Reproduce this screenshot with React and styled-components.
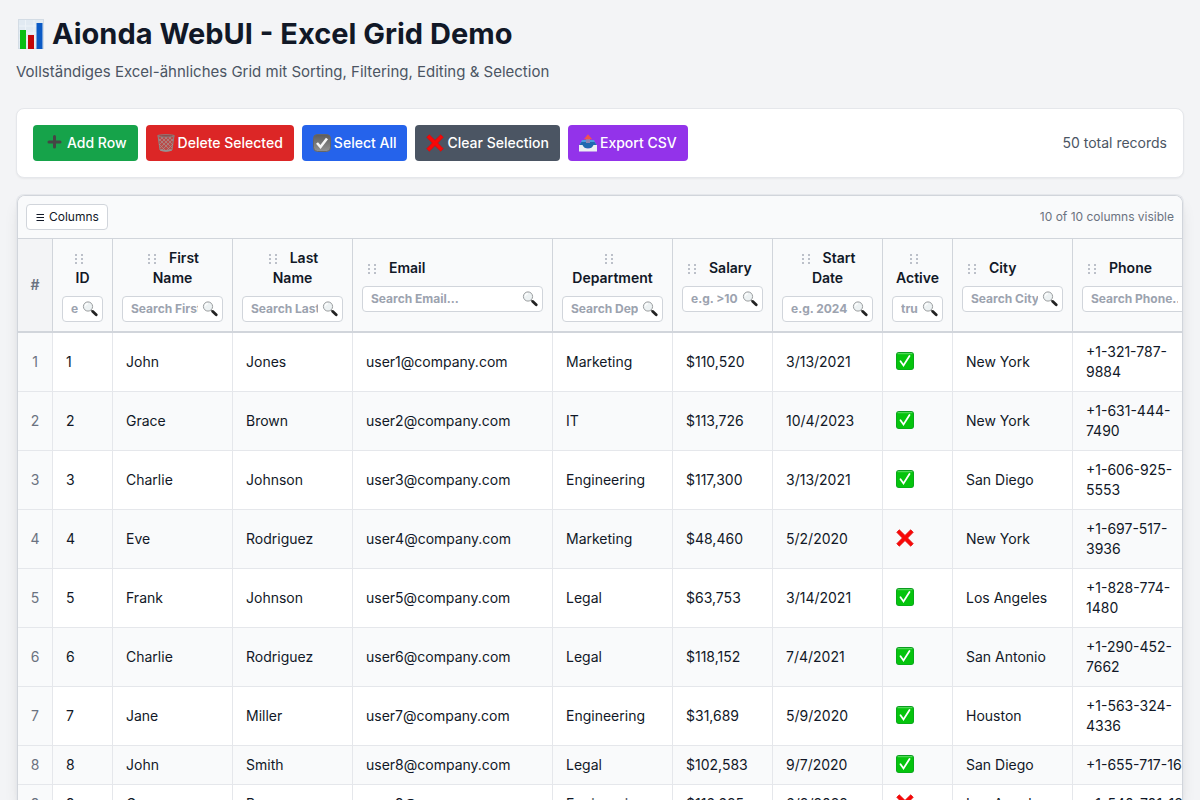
import React from "react";
import styled, { createGlobalStyle } from "styled-components";

const Global = createGlobalStyle`
  *, *::before, *::after { box-sizing: border-box; }
  html, body, #root { height: 100%; }
  body {
    margin: 0;
    background: #f3f4f6;
    color: #111827;
    font-family: Inter, "Liberation Sans", sans-serif;
    font-size: 14px;
    line-height: 20px;
    overflow: hidden;
  }
`;

const Page = styled.div`
  height: 100vh;
  display: flex;
  flex-direction: column;
  padding: 16px 16px 0;
`;

const Header = styled.header`
  margin-bottom: 24px;
`;

const Title = styled.h1`
  display: flex;
  align-items: center;
  gap: 6px;
  margin: 0 0 8px;
  font-size: 29px;
  line-height: 36px;
  font-weight: 700;
`;

const Subtitle = styled.p`
  margin: 0;
  font-size: 15px;
  line-height: 24px;
  color: #4b5563;
`;

const Toolbar = styled.section`
  display: flex;
  align-items: center;
  justify-content: space-between;
  flex: none;
  margin-bottom: 16px;
  padding: 16px;
  background: #fff;
  border: 1px solid #e5e7eb;
  border-radius: 8px;
  box-shadow: 0 1px 2px rgba(0, 0, 0, 0.05);
`;

const Actions = styled.div`
  display: flex;
  gap: 8px;
`;

const ActionButton = styled.button`
  display: flex;
  align-items: center;
  gap: 3px;
  height: 36px;
  padding: 0 11px;
  border: 0;
  border-radius: 4px;
  background: ${(p) => p.$color};
  color: #fff;
  font: 500 14px/20px Inter, "Liberation Sans", sans-serif;
  white-space: nowrap;
`;

const Total = styled.span`
  color: #4b5563;
`;

const Frame = styled.section`
  flex: 1;
  min-height: 0;
  border: 1px solid #e5e7eb;
  border-bottom: 0;
  border-radius: 8px 8px 0 0;
  box-shadow: 0 10px 15px -3px rgba(0, 0, 0, 0.1), 0 4px 6px -4px rgba(0, 0, 0, 0.1);
`;

const Grid = styled.div`
  height: 100%;
  overflow: hidden;
  background: #fff;
  border: 1px solid #d1d5db;
  border-bottom: 0;
  border-radius: 8px 8px 0 0;
`;

const GridBar = styled.div`
  display: flex;
  align-items: center;
  justify-content: space-between;
  padding: 8px;
  background: #f9fafb;
  border-bottom: 1px solid #d1d5db;
  font-size: 12px;
  line-height: 16px;
  color: #6b7280;
`;

const ColumnsButton = styled.button`
  display: flex;
  align-items: center;
  gap: 4px;
  height: 26px;
  padding: 0 8px;
  border: 1px solid #d1d5db;
  border-radius: 4px;
  background: #fff;
  color: #111827;
  font: 400 12px/16px Inter, "Liberation Sans", sans-serif;
`;

const Table = styled.table`
  width: 1195px;
  table-layout: fixed;
  border-collapse: separate;
  border-spacing: 0;
`;

const Col = styled.col`
  width: ${(p) => p.$width}px;
`;

const HeadCell = styled.th`
  height: 94px;
  padding: 9px;
  vertical-align: ${(p) => (p.$index ? "middle" : "top")};
  background: ${(p) => (p.$index ? "#f3f4f6" : "#f9fafb")};
  color: ${(p) => (p.$index ? "#6b7280" : "#111827")};
  border-right: 1px solid #d1d5db;
  border-bottom: 2px solid #d1d5db;
  font-weight: 600;
`;

const HeadInner = styled.div`
  display: flex;
  flex-direction: column;
  justify-content: center;
  min-height: 74px;
`;

const HeadLabel = styled.div`
  padding: 0 4px;
  margin-bottom: 8px;
  text-align: ${(p) => (p.$left ? "left" : "center")};
`;

const Grip = styled.svg`
  width: 10px;
  height: 10px;
  margin-right: ${(p) => (p.$alone ? 8 : 12)}px;
  margin-left: ${(p) => (p.$alone ? 0 : 1)}px;
  vertical-align: -1px;
  fill: #a7adb8;
`;

const Filter = styled.label`
  display: flex;
  align-items: center;
  height: 26px;
  padding: 0 4px 0 8px;
  border: 1px solid #d1d5db;
  border-radius: 4px;
  background: #fff;
`;

const FilterInput = styled.input`
  flex: 1;
  width: 0;
  min-width: 0;
  margin-right: 4px;
  padding: 0;
  border: 0;
  outline: 0;
  background: transparent;
  color: #111827;
  font: 700 12px/16px Inter, "Liberation Sans", sans-serif;
  &::placeholder { color: #9ca3af; opacity: 1; }
`;

const Row = styled.tr`
  background: ${(p) => (p.$even ? "#f9fafb" : "#fff")};
`;

const Cell = styled.td`
  padding: 9px 13px;
  border-right: 1px solid #e5e7eb;
  border-bottom: 1px solid #e5e7eb;
  & > svg { display: block; margin-bottom: 2px; }
`;

const PhoneCell = styled(Cell)`
  padding-right: 24px;
  white-space: ${(p) => (p.$single ? "nowrap" : "normal")};
`;

const IndexCell = styled(Cell)`
  padding: 9px 0;
  background: #f9fafb;
  color: #6b7280;
  text-align: center;
`;

const ChartIcon = () => (
  <svg width="30" height="32" viewBox="0 0 30 32" aria-hidden="true">
    <rect x="2.500" y="1.500" width="25" height="29" fill="#e1eaf2" stroke="#d3dce5" />
    <path d="M3 8h24M3 15h24M3 22h24M9.500 2v28M18 2v28" stroke="#edf3f8" />
    <rect x="4" y="12" width="6" height="19" fill="#08bd12" />
    <rect x="12" y="17" width="6" height="14" fill="#c30709" />
    <rect x="20.500" y="5" width="6" height="26" fill="#0b5ac5" />
  </svg>
);

const PlusIcon = () => (
  <svg width="20" height="18" viewBox="0 0 20 18" aria-hidden="true">
    <path d="M10.500 2.500v10.500M5 8h11" stroke="#454545" strokeWidth="3" strokeLinecap="round" />
  </svg>
);

const TrashIcon = () => (
  <svg width="18" height="18" viewBox="0 0 18 18" aria-hidden="true">
    <path d="M1 1.500 3 16q6 2 12 0L17 1.500z" fill="#b94b49" stroke="#8c8585" />
    <path d="m2 5 11 11M4 3l11 11M8 3l8 8M12 3l4 4M2 10l6 6M16 5 5 16M14 3 3 14M10 3 2 11M6 3 2 7M16 10l-6 6" stroke="#a8918f" strokeWidth=".7" />
    <path d="M3.500 15.800q5.500 2 11 0" fill="none" stroke="#989393" strokeWidth="1.800" />
    <ellipse cx="9" cy="1.800" rx="8.300" ry="1.200" fill="#8e4a47" stroke="#8d8585" strokeWidth=".8" />
  </svg>
);

const BoxIcon = () => (
  <svg width="18" height="18" viewBox="0 0 18 18" aria-hidden="true">
    <defs>
      <linearGradient id="box-fill" x2="0" y2="1">
        <stop stopColor="#5b5b5b" />
        <stop offset="1" stopColor="#929292" />
      </linearGradient>
    </defs>
    <rect x=".5" y=".5" width="17" height="17" rx="4" fill="url(#box-fill)" stroke="#666" />
    <path d="m4 9 3.500 4L14 4.500" fill="none" stroke="#f5f5f5" strokeWidth="2.600" />
  </svg>
);

const CrossIcon = () => (
  <svg width="18" height="18" viewBox="0 0 18 18" aria-hidden="true">
    <path d="M3.300.8 9 6.400 14.700.8 17.200 3.300 11.600 9l5.600 5.700-2.500 2.500L9 11.600l-5.700 5.600L.8 14.700 6.400 9 .8 3.300z" fill="#f90707" stroke="#e00808" strokeWidth=".8" strokeLinejoin="round" />
  </svg>
);

const OutboxIcon = () => (
  <svg width="18" height="18" viewBox="0 0 18 18" aria-hidden="true">
    <path d="M3 6h12l2.500 5v3H.5v-3z" fill="#4c9be0" />
    <path d="M2.500 8h13l2 3-4 3.500h-9L.5 11z" fill="#2168b0" />
    <path d="M0 11h3.500q1.500 3.500 5.500 3.500t5.500-3.500H18v6.500H0z" fill="#eceff2" />
    <path d="M7 9V5h4v4z" fill="#8d83b5" />
    <path d="M4.800 5.200 9 .3l4.200 4.900z" fill="#f15350" />
  </svg>
);

const CheckIcon = () => (
  <svg width="18" height="18" viewBox="0 0 18 18" aria-hidden="true">
    <rect width="18" height="18" rx="3" fill="#0b9c20" />
    <rect x=".6" y="1" width="16.800" height="16.400" rx="2.800" fill="#05c40d" />
    <path d="M2 1.700h14" stroke="#62de68" strokeWidth="1" strokeLinecap="round" />
    <path d="m4.500 9.300 3 4.200L13.500 4" fill="none" stroke="#fff" strokeWidth="1.800" strokeLinecap="round" />
  </svg>
);

const SearchIcon = () => (
  <svg width="16" height="16" viewBox="0 0 16 16" aria-hidden="true">
    <path d="m9 9 2 2" stroke="#777" strokeWidth="1.500" />
    <path d="m10.800 10.500 3.400 3.300" stroke="#222" strokeWidth="2.800" strokeLinecap="round" />
    <circle cx="6" cy="5.500" r="4.600" fill="#edf2f3" stroke="#9a9d9f" />
    <path d="M3.300 5.200A2.800 2.800 0 0 1 6 2.700" fill="none" stroke="#fff" strokeWidth="1.200" />
  </svg>
);

const GripIcon = (props) => (
  <Grip viewBox="0 0 10 10" aria-hidden="true" {...props}>
    {[1, 7].map((x) => [0, 4, 8].map((y) => <rect key={`${x}-${y}`} x={x} y={y} width="2" height="2" rx="1" />))}
  </Grip>
);

const MenuIcon = () => (
  <svg width="10" height="10" viewBox="0 0 10 10" aria-hidden="true">
    <path d="M1.500 2.500h7.500M1.500 5.500h7.500M1.500 8.500h7.500" stroke="#111827" strokeWidth="1.200" />
  </svg>
);

const actions = [
  ["Add Row", "#16a34a", PlusIcon],
  ["Delete Selected", "#dc2626", TrashIcon],
  ["Select All", "#2563eb", BoxIcon],
  ["Clear Selection", "#4b5563", CrossIcon],
  ["Export CSV", "#9333ea", OutboxIcon],
];

const columns = [
  { lines: ["", "ID"], width: 60, hint: "e.g. >100" },
  { lines: ["First", "Name"], width: 120, hint: "Search First Name..." },
  { lines: ["Last", "Name"], width: 120, hint: "Search Last Name..." },
  { lines: ["Email"], width: 200, hint: "Search Email..." },
  { lines: ["", "Department"], width: 120, hint: "Search Department..." },
  { lines: ["Salary"], width: 100, hint: "e.g. >1000" },
  { lines: ["Start", "Date"], width: 110, hint: "e.g. 2024-01-01" },
  { lines: ["", "Active"], width: 70, hint: "true/false" },
  { lines: ["City"], width: 120, hint: "Search City..." },
  { lines: ["Phone"], width: 140, hint: "Search Phone..." },
];

const rows = [
  ["John", "Jones", "Marketing", "$110,520", "3/13/2021", true, "New York", "+1-321-787-9884"],
  ["Grace", "Brown", "IT", "$113,726", "10/4/2023", true, "New York", "+1-631-444-7490"],
  ["Charlie", "Johnson", "Engineering", "$117,300", "3/13/2021", true, "San Diego", "+1-606-925-5553"],
  ["Eve", "Rodriguez", "Marketing", "$48,460", "5/2/2020", false, "New York", "+1-697-517-3936"],
  ["Frank", "Johnson", "Legal", "$63,753", "3/14/2021", true, "Los Angeles", "+1-828-774-1480"],
  ["Charlie", "Rodriguez", "Legal", "$118,152", "7/4/2021", true, "San Antonio", "+1-290-452-7662"],
  ["Jane", "Miller", "Engineering", "$31,689", "5/9/2020", true, "Houston", "+1-563-324-4336"],
  ["John", "Smith", "Legal", "$102,583", "9/7/2020", true, "San Diego", "+1-655-717-1680"],
  ["Grace", "Brown", "Engineering", "$116,685", "6/8/2022", false, "Los Angeles", "+1-540-701-1888"],
];

export default function App() {
  return (
    <Page>
      <Global />
      <Header>
        <Title><ChartIcon />Aionda WebUI - Excel Grid Demo</Title>
        <Subtitle>Vollständiges Excel-ähnliches Grid mit Sorting, Filtering, Editing &amp; Selection</Subtitle>
      </Header>
      <Toolbar>
        <Actions>
          {actions.map(([label, color, Icon]) => (
            <ActionButton key={label} type="button" $color={color}><Icon />{label}</ActionButton>
          ))}
        </Actions>
        <Total>50 total records</Total>
      </Toolbar>
      <Frame>
        <Grid>
          <GridBar>
            <ColumnsButton type="button"><MenuIcon />Columns</ColumnsButton>
            <span>10 of 10 columns visible</span>
          </GridBar>
          <Table>
            <colgroup>
              <Col $width={35} />
              {columns.map((c) => <Col key={c.hint} $width={c.width} />)}
            </colgroup>
            <thead>
              <tr>
                <HeadCell $index scope="col">#</HeadCell>
                {columns.map((c) => {
                  const name = c.lines.join(" ").trim();
                  return (
                    <HeadCell key={name} scope="col">
                      <HeadInner>
                        <HeadLabel $left={c.lines.length === 1}>
                          <GripIcon $alone={c.lines[0] === ""} />
                          {c.lines[0]}
                          {c.lines[1] && <><br />{c.lines[1]}</>}
                        </HeadLabel>
                        <Filter>
                          <FilterInput type="text" placeholder={c.hint} aria-label={`Filter ${name}`} />
                          <SearchIcon />
                        </Filter>
                      </HeadInner>
                    </HeadCell>
                  );
                })}
              </tr>
            </thead>
            <tbody>
              {rows.map(([first, last, dept, salary, start, active, city, phone], i) => (
                <Row key={phone} $even={i % 2 === 1}>
                  <IndexCell>{i + 1}</IndexCell>
                  <Cell>{i + 1}</Cell>
                  <Cell>{first}</Cell>
                  <Cell>{last}</Cell>
                  <Cell>{`user${i + 1}@company.com`}</Cell>
                  <Cell>{dept}</Cell>
                  <Cell>{salary}</Cell>
                  <Cell>{start}</Cell>
                  <Cell>{active ? <CheckIcon /> : <CrossIcon />}</Cell>
                  <Cell>{city}</Cell>
                  <PhoneCell $single={i > 6}>{phone}</PhoneCell>
                </Row>
              ))}
            </tbody>
          </Table>
        </Grid>
      </Frame>
    </Page>
  );
}
